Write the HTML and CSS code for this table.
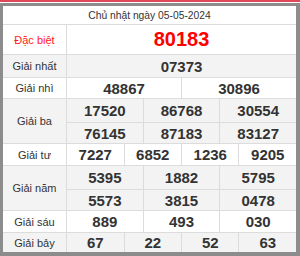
FILE: index.html
```html
<!DOCTYPE html>
<html lang="vi">
<head>
<meta charset="utf-8">
<link rel="stylesheet" href="styles.css">
</head>
<body>
<div class="topline"></div>
<div class="board">
  <div class="cell head span-all">Chủ nhật ngày 05-05-2024</div>

  <div class="cell label special">Đặc biệt</div>
  <div class="cell num big span-12">80183</div>

  <div class="cell label alt">Giải nhất</div>
  <div class="cell num alt span-12">07373</div>

  <div class="cell label">Giải nhì</div>
  <div class="cell num span-6">48867</div>
  <div class="cell num span-6">30896</div>

  <div class="cell label alt rows-2">Giải ba</div>
  <div class="cell num alt span-4">17520</div>
  <div class="cell num alt span-4">86768</div>
  <div class="cell num alt span-4">30554</div>
  <div class="cell num alt span-4">76145</div>
  <div class="cell num alt span-4">87183</div>
  <div class="cell num alt span-4">83127</div>

  <div class="cell label">Giải tư</div>
  <div class="cell num span-3">7227</div>
  <div class="cell num span-3">6852</div>
  <div class="cell num span-3">1236</div>
  <div class="cell num span-3">9205</div>

  <div class="cell label alt rows-2">Giải năm</div>
  <div class="cell num alt span-4">5395</div>
  <div class="cell num alt span-4">1882</div>
  <div class="cell num alt span-4">5795</div>
  <div class="cell num alt span-4">5573</div>
  <div class="cell num alt span-4">3815</div>
  <div class="cell num alt span-4">0478</div>

  <div class="cell label">Giải sáu</div>
  <div class="cell num span-4">889</div>
  <div class="cell num span-4">493</div>
  <div class="cell num span-4">030</div>

  <div class="cell label alt">Giải bảy</div>
  <div class="cell num alt span-3">67</div>
  <div class="cell num alt span-3">22</div>
  <div class="cell num alt span-3">52</div>
  <div class="cell num alt span-3">63</div>
</div>
</body>
</html>
```
FILE: styles.css
```css
html, body {
  margin: 0;
  padding: 0;
  background: #ffffff;
}
body {
  width: 300px;
  height: 256px;
  overflow: hidden;
  font-family: "Liberation Sans", Arial, sans-serif;
  color: #333333;
}
.topline {
  height: 2px;
  background: #e0485a;
  margin-bottom: 1px;
}
.board {
  border-style: solid;
  border-color: #8c8c8c;
  border-width: 3px 4px 4px 3px;
  display: grid;
  grid-template-columns: 63px repeat(12, 1fr);
  grid-template-rows: 18px 29px 22px 20px 23px 20px 21px 23px 20px 21px 19px;
  gap: 1px;
  background: #dcdcdc;
}
.cell {
  background: #ffffff;
  display: flex;
  align-items: center;
  justify-content: center;
  white-space: nowrap;
}
.cell.alt {
  background: #f3f3f3;
}
.span-all { grid-column: 1 / -1; }
.span-12 { grid-column: span 12; }
.span-6 { grid-column: span 6; }
.span-4 { grid-column: span 4; }
.span-3 { grid-column: span 3; }
.rows-2 { grid-row: span 2; }
.head {
  font-size: 10.3px;
  color: #333333;
}
.label {
  font-size: 11px;
  color: #333333;
}
.label.special {
  color: #ff1a1a;
}
.num {
  font-size: 15px;
  font-weight: bold;
  color: #333333;
}
.num.big {
  font-size: 20px;
  color: #ff0000;
}
```
